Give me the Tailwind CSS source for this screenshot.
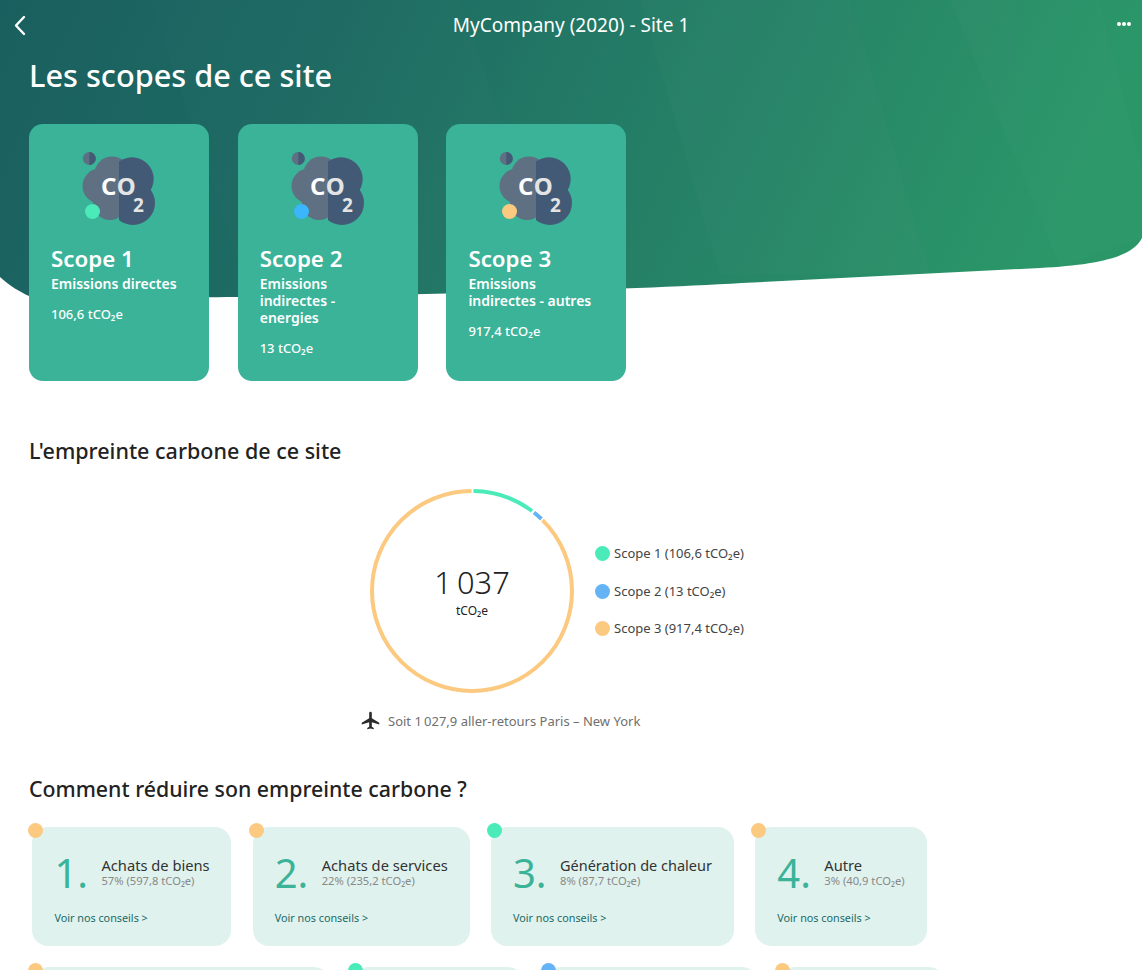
<!DOCTYPE html>
<html lang="fr">
<head>
<meta charset="utf-8">
<title>MyCompany (2020) - Site 1</title>
<script src="https://cdn.jsdelivr.net/npm/@tailwindcss/browser@4"></script>
</head>
<body class="relative h-[970px] overflow-hidden bg-white font-['Noto_Sans',sans-serif] text-[#222]">

<!-- header background -->
<svg class="absolute top-0 left-0" width="1142" height="300" viewBox="0 0 1142 300">
    <defs>
        <linearGradient id="hero" x1="0" y1="0" x2="1" y2="0.12">
            <stop offset="0" stop-color="#1a5f5f"/>
            <stop offset="0.3" stop-color="#1d6a63"/>
            <stop offset="0.65" stop-color="#258066"/>
            <stop offset="1" stop-color="#2b9769"/>
        </linearGradient>
        <clipPath id="right-half"><rect x="37" y="0" width="37" height="75"/></clipPath>
        <symbol id="co2" viewBox="0 0 74 75">
            <circle cx="7.300" cy="7.500" r="6.500" fill="#5e7082"/>
            <path d="M7.300 1A6.500 6.500 0 0 1 7.300 14Z" fill="#425a75"/>
            <circle cx="30" cy="23" r="17.500" fill="#5e7082"/>
            <circle cx="18" cy="35" r="17.500" fill="#5e7082"/>
            <circle cx="28" cy="52" r="17" fill="#5e7082"/>
            <rect x="26" y="10" width="12" height="50" fill="#5e7082"/>
            <g clip-path="url(#right-half)" fill="#425a75">
                <circle cx="50" cy="28" r="21.700"/>
                <circle cx="51" cy="52" r="22"/>
            </g>
            <text x="19" y="44" font-family="Noto Sans" font-size="24" font-weight="700" letter-spacing="0.8" fill="#fff">C<tspan fill="#e4e4e4">O</tspan></text>
            <text x="51" y="61" font-family="Noto Sans" font-size="19" font-weight="700" fill="#e4e4e4">2</text>
        </symbol>
    </defs>
    <path d="M0 277C10 286 20 292 29 296C60 298 90 298.500 238 297C418 295 627 290 742 283L1040 268C1095 265 1132 258 1142 238V0H0Z" fill="url(#hero)"/>
    <g fill="#fff" opacity="0.012">
        <path d="M150 0H460L560 296H250Z"/>
        <path d="M640 0H850L930 274H720Z"/>
        <path d="M950 0H1100L1142 170V238L1060 267Z"/>
    </g>
</svg>

<div class="relative">
    <!-- top bar -->
    <div class="relative flex h-[50px] items-center justify-center text-white">
        <svg class="absolute top-[15px] left-[13px]" width="14" height="21" viewBox="0 0 14 21" fill="none" stroke="#fff" stroke-width="2.4" stroke-linecap="round" stroke-linejoin="round">
            <path d="M11 2L3 10.500L11 19"/>
        </svg>
        <div class="text-[19px]">MyCompany (2020) - Site 1</div>
        <div class="absolute top-[22px] right-[11px] flex gap-[1px]">
            <span class="size-1 rounded-full bg-white"></span>
            <span class="size-1 rounded-full bg-white"></span>
            <span class="size-1 rounded-full bg-white"></span>
        </div>
    </div>

    <h1 class="mt-[4px] ml-[29px] text-[30.700px] leading-[42px] font-medium text-white">Les scopes de ce site</h1>

    <!-- scope cards -->
    <div class="mt-[28px] ml-[29px] flex gap-[28.700px]">
        <div class="h-[257px] w-[180px] rounded-[14px] bg-[#3ab399] px-[22px] pt-[27px] text-white">
            <div class="relative ml-[31px] h-[75px] w-[74px]">
                <svg width="74" height="75"><use href="#co2"/></svg>
                <span class="absolute top-[53px] left-[3px] size-[15px] rounded-full bg-[#4aebb9]"></span>
            </div>
            <div class="mt-[18px] text-[22.300px] leading-[30px] font-semibold">Scope 1</div>
            <div class="mt-[1px] text-[14px] leading-[17px] font-semibold">Emissions directes</div>
            <div class="mt-[13px] text-[13px] leading-[18px] font-medium">106,6 tCO₂e</div>
        </div>
        <div class="h-[257px] w-[180px] rounded-[14px] bg-[#3ab399] px-[22px] pt-[27px] text-white">
            <div class="relative ml-[31px] h-[75px] w-[74px]">
                <svg width="74" height="75"><use href="#co2"/></svg>
                <span class="absolute top-[53px] left-[3px] size-[15px] rounded-full bg-[#3bb5fb]"></span>
            </div>
            <div class="mt-[18px] text-[22.300px] leading-[30px] font-semibold">Scope 2</div>
            <div class="mt-[1px] text-[14px] leading-[17px] font-semibold">Emissions<br>indirectes -<br>energies</div>
            <div class="mt-[13px] text-[13px] leading-[18px] font-medium">13 tCO₂e</div>
        </div>
        <div class="h-[257px] w-[180px] rounded-[14px] bg-[#3ab399] px-[22px] pt-[27px] text-white">
            <div class="relative ml-[31px] h-[75px] w-[74px]">
                <svg width="74" height="75"><use href="#co2"/></svg>
                <span class="absolute top-[53px] left-[3px] size-[15px] rounded-full bg-[#fcc980]"></span>
            </div>
            <div class="mt-[18px] text-[22.300px] leading-[30px] font-semibold">Scope 3</div>
            <div class="mt-[1px] text-[14px] leading-[17px] font-semibold">Emissions<br>indirectes - autres</div>
            <div class="mt-[13px] text-[13px] leading-[18px] font-medium">917,4 tCO₂e</div>
        </div>
    </div>

    <!-- carbon footprint -->
    <h2 class="mt-[56px] ml-[29px] text-[21.500px] leading-[28px] font-medium">L'empreinte carbone de ce site</h2>

    <div class="mt-[24px] ml-[370px] flex items-center">
        <div class="relative size-[204px]">
            <svg width="204" height="204" viewBox="0 0 204 204" fill="none" stroke-width="4" class="-rotate-90">
                <circle cx="102" cy="102" r="100" stroke="#fcc980" stroke-dasharray="548.6 79.7" stroke-dashoffset="-78.2"/>
                <circle cx="102" cy="102" r="100" stroke="#4aebb9" stroke-dasharray="62.8 565.5" stroke-dashoffset="-1.5"/>
                <circle cx="102" cy="102" r="100" stroke="#63b3f5" stroke-dasharray="9.8 618.5" stroke-dashoffset="-66.8"/>
            </svg>
            <div class="absolute inset-0 flex flex-col items-center justify-center pb-[2px]">
                <div class="text-[30.800px] leading-[42px] font-light">1&#8239;037</div>
                <div class="text-[12px] leading-[16px]">tCO₂e</div>
            </div>
        </div>
        <div class="ml-[21px] flex flex-col gap-[18.500px] text-[13px] leading-[19px] text-[#444]">
            <div class="flex items-center gap-[4px]"><span class="size-[15px] rounded-full bg-[#4aebb9]"></span>Scope 1 (106,6 tCO₂e)</div>
            <div class="flex items-center gap-[4px]"><span class="size-[15px] rounded-full bg-[#63b3f5]"></span>Scope 2 (13 tCO₂e)</div>
            <div class="flex items-center gap-[4px]"><span class="size-[15px] rounded-full bg-[#fcc980]"></span>Scope 3 (917,4 tCO₂e)</div>
        </div>
    </div>

    <div class="mt-[17px] ml-[360px] flex items-center gap-[7px] text-[13px] leading-[20px] text-[#6f6f6f]">
        <svg width="21" height="21" viewBox="0 0 24 24" fill="#2a2a2a"><path d="M22 16.500v-2l-8.500-5.200V3.500A1.500 1.500 0 0 0 12 2a1.500 1.500 0 0 0-1.500 1.500v5.800L2 14.500v2l8.500-2.600V19l-2.200 1.600V22l3.700-1 3.700 1v-1.400L13.500 19v-5.100z"/></svg>
        <span>Soit 1&#8239;027,9 aller-retours Paris – New York</span>
    </div>

    <!-- actions -->
    <h2 class="mt-[44px] ml-[29px] text-[21.300px] leading-[28px] font-medium">Comment réduire son empreinte carbone ?</h2>

    <div class="mt-[24px] ml-[32.400px] flex w-[1000px] flex-wrap gap-x-[21.300px] gap-y-[21.300px]">
        <div class="relative h-[119px] w-[199px] rounded-[16px] bg-[#e0f2ee] px-[22px] pt-[24px]">
            <span class="absolute top-[-4px] left-[-4px] size-[15px] rounded-full bg-[#fcc980]"></span>
            <div class="flex h-[43px] items-center whitespace-nowrap">
                <span class="w-[47px] shrink-0 text-[40px] leading-[43px] text-[#3ab399]">1.</span>
                <div class="pb-[2px]"><div class="text-[14.700px] leading-[18px] text-[#333]">Achats de biens</div><div class="text-[11.200px] leading-[14px] text-[#888]">57% (597,8 tCO₂e)</div></div>
            </div>
            <div class="mt-[17px] text-[10.800px] leading-[14px] text-[#1a6a66]">Voir nos conseils &gt;</div>
        </div>
        <div class="relative h-[119px] w-[217px] rounded-[16px] bg-[#e0f2ee] px-[22px] pt-[24px]">
            <span class="absolute top-[-4px] left-[-4px] size-[15px] rounded-full bg-[#fcc980]"></span>
            <div class="flex h-[43px] items-center whitespace-nowrap">
                <span class="w-[47px] shrink-0 text-[40px] leading-[43px] text-[#3ab399]">2.</span>
                <div class="pb-[2px]"><div class="text-[14.700px] leading-[18px] text-[#333]">Achats de services</div><div class="text-[11.200px] leading-[14px] text-[#888]">22% (235,2 tCO₂e)</div></div>
            </div>
            <div class="mt-[17px] text-[10.800px] leading-[14px] text-[#1a6a66]">Voir nos conseils &gt;</div>
        </div>
        <div class="relative h-[119px] w-[243px] rounded-[16px] bg-[#e0f2ee] px-[22px] pt-[24px]">
            <span class="absolute top-[-4px] left-[-4px] size-[15px] rounded-full bg-[#4aebb9]"></span>
            <div class="flex h-[43px] items-center whitespace-nowrap">
                <span class="w-[47px] shrink-0 text-[40px] leading-[43px] text-[#3ab399]">3.</span>
                <div class="pb-[2px]"><div class="text-[14.500px] leading-[18px] text-[#333]">Génération de chaleur</div><div class="text-[11.200px] leading-[14px] text-[#888]">8% (87,7 tCO₂e)</div></div>
            </div>
            <div class="mt-[17px] text-[10.800px] leading-[14px] text-[#1a6a66]">Voir nos conseils &gt;</div>
        </div>
        <div class="relative h-[119px] w-[172px] rounded-[16px] bg-[#e0f2ee] px-[22px] pt-[24px]">
            <span class="absolute top-[-4px] left-[-4px] size-[15px] rounded-full bg-[#fcc980]"></span>
            <div class="flex h-[43px] items-center whitespace-nowrap">
                <span class="w-[47px] shrink-0 text-[40px] leading-[43px] text-[#3ab399]">4.</span>
                <div class="pb-[2px]"><div class="text-[14.700px] leading-[18px] text-[#333]">Autre</div><div class="text-[11.200px] leading-[14px] text-[#888]">3% (40,9 tCO₂e)</div></div>
            </div>
            <div class="mt-[17px] text-[10.800px] leading-[14px] text-[#1a6a66]">Voir nos conseils &gt;</div>
        </div>
        <!-- next row, cut off by the window -->
        <div class="relative h-[119px] w-[298px] rounded-[16px] bg-[#e0f2ee]"><span class="absolute top-[-4px] left-[-4px] size-[15px] rounded-full bg-[#fcc980]"></span></div>
        <div class="relative h-[119px] w-[172px] rounded-[16px] bg-[#e0f2ee]"><span class="absolute top-[-4px] left-[-4px] size-[15px] rounded-full bg-[#4aebb9]"></span></div>
        <div class="relative h-[119px] w-[213px] rounded-[16px] bg-[#e0f2ee]"><span class="absolute top-[-4px] left-[-4px] size-[15px] rounded-full bg-[#63b3f5]"></span></div>
        <div class="relative h-[119px] w-[166px] rounded-[16px] bg-[#e0f2ee]"><span class="absolute top-[-4px] left-[-4px] size-[15px] rounded-full bg-[#fcc980]"></span></div>
    </div>
</div>

</body>
</html>
